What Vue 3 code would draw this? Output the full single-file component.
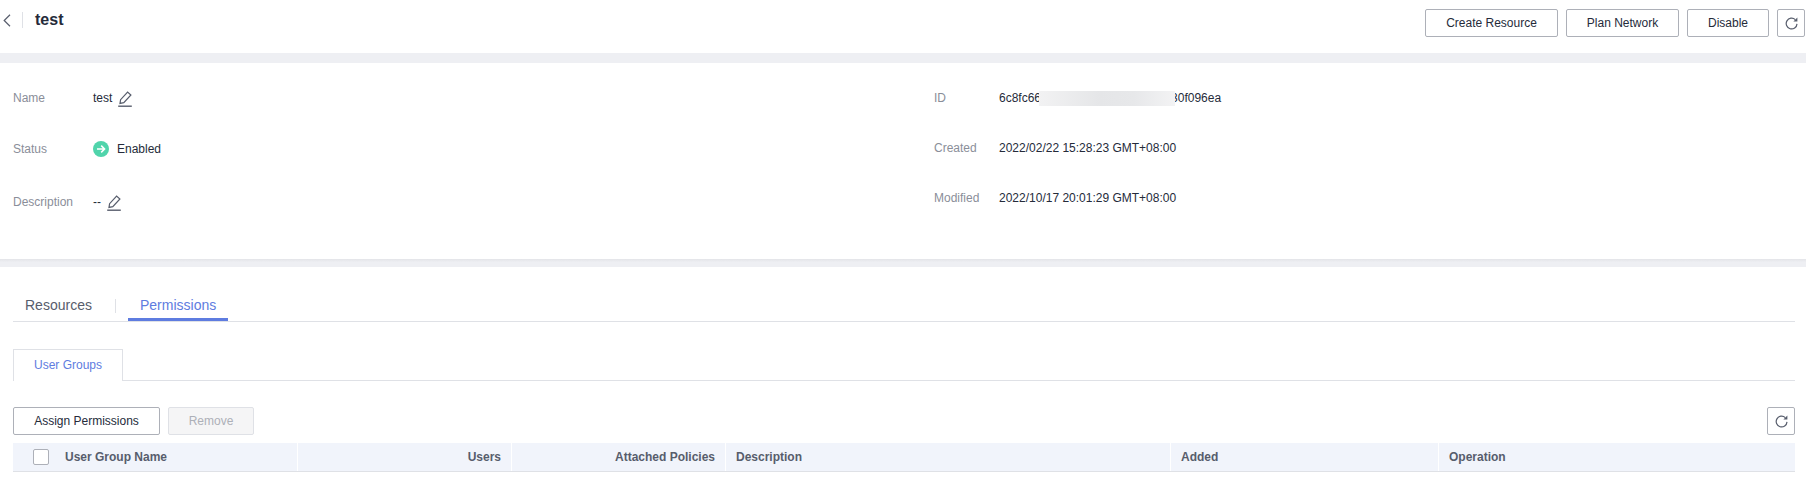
<script setup>
const leftRows = [
  { label: 'Name', value: 'test', edit: true, kind: '' },
  { label: 'Status', value: 'Enabled', status: true, kind: 'nudge-status' },
  { label: 'Description', value: '--', edit: true, kind: 'nudge-desc' },
]
const rightRows = [
  { label: 'Created', value: '2022/02/22 15:28:23 GMT+08:00' },
  { label: 'Modified', value: '2022/10/17 20:01:29 GMT+08:00' },
]
const columns = [
  { label: 'Users', end: true },
  { label: 'Attached Policies', end: true },
  { label: 'Description' },
  { label: 'Added' },
  { label: 'Operation' },
]
</script>

<template>
  <div class="page">
    <header class="top">
      <svg class="back" width="8" height="13" viewBox="0 0 8 13"><path d="M7 .8 1.2 6.5 7 12.2" fill="none" stroke="#575d6c" stroke-width="1.2"/></svg>
      <span class="top-sep"></span>
      <h1 class="title">test</h1>
      <div class="top-actions">
        <button class="btn create">Create Resource</button>
        <button class="btn plan">Plan Network</button>
        <button class="btn disable">Disable</button>
        <button class="btn icon-btn" aria-label="Refresh">
          <svg width="13" height="13" viewBox="0 0 13 13"><path d="M12 6.9A5.4 5.4 0 1 1 10.3 2.6" fill="none" stroke="#575d6c" stroke-width="1.2"/><path d="M12.4 .6v4H8.4z" fill="#575d6c"/></svg>
        </button>
      </div>
    </header>
    <div class="band"></div>

    <section class="info">
      <div class="col col-left">
        <div v-for="row in leftRows" :key="row.label" class="row" :class="row.kind">
          <span class="label">{{ row.label }}</span>
          <span v-if="row.status" class="status-dot">
            <svg width="10" height="10" viewBox="0 0 10 10"><path d="M1 5h7.4M5.2 1.6 8.6 5 5.2 8.4" fill="none" stroke="#fff" stroke-width="1.5"/></svg>
          </span>
          <span class="value">{{ row.value }}</span>
          <svg v-if="row.edit" class="edit" width="14" height="16" viewBox="0 0 14 16">
            <path d="M2 12.4 2.6 8.7 9.6 1 12.9 4 5.8 11.6Z" fill="none" stroke="#575d6c" stroke-width="1.2"/>
            <path d="M.2 15.2h13.6" stroke="#575d6c" stroke-width="1.4"/>
          </svg>
        </div>
      </div>
      <div class="col col-right">
        <div class="row">
          <span class="label">ID</span>
          <span class="value">6c8fc66</span>
          <span class="redact"></span>
          <span class="value id-tail">30f096ea</span>
        </div>
        <div v-for="row in rightRows" :key="row.label" class="row">
          <span class="label">{{ row.label }}</span>
          <span class="value">{{ row.value }}</span>
        </div>
      </div>
    </section>
    <div class="band band-thin"></div>

    <section class="content">
      <nav class="tabs">
        <span class="tab">Resources</span>
        <span class="tab-sep"></span>
        <span class="tab active">Permissions</span>
      </nav>
      <div class="subtabs">
        <span class="subtab">User Groups</span>
      </div>
      <div class="toolbar">
        <button class="btn assign">Assign Permissions</button>
        <button class="btn remove" disabled>Remove</button>
        <button class="btn icon-btn table-refresh" aria-label="Refresh">
          <svg width="13" height="13" viewBox="0 0 13 13"><path d="M12 6.9A5.4 5.4 0 1 1 10.3 2.6" fill="none" stroke="#575d6c" stroke-width="1.2"/><path d="M12.4 .6v4H8.4z" fill="#575d6c"/></svg>
        </button>
      </div>
      <div class="thead">
        <div class="th th-name">
          <span class="checkbox"></span>
          <span>User Group Name</span>
        </div>
        <div v-for="c in columns" :key="c.label" class="th" :class="{ end: c.end }">{{ c.label }}</div>
      </div>
    </section>
  </div>
</template>

<style>
html, body { margin: 0; background: #fff; }
</style>

<style scoped>
.page {
  width: 1806px;
  height: 500px;
  overflow: hidden;
  font-family: "Liberation Sans", Arial, sans-serif;
  font-size: 12px;
  color: #252b3a;
  background: #fff;
}
.top {
  height: 53px;
  display: flex;
  align-items: center;
  padding: 0 1px 0 3px;
  box-sizing: border-box;
}
.back { margin-top: -13px; flex: none; }
.top-sep { width: 1px; height: 16px; background: #dfe1e6; margin: -13px 0 0 11px; }
.title { margin: -13px 0 0 12px; font-size: 16px; font-weight: 700; line-height: 24px; }
.top-actions { margin-left: auto; margin-top: -7px; display: flex; gap: 8px; }
.btn {
  height: 28px;
  box-sizing: border-box;
  padding: 0;
  border: 1px solid #adb0b8;
  border-radius: 2px;
  background: #fff;
  color: #252b3a;
  font: 12px "Liberation Sans", Arial, sans-serif;
}
.create { width: 133px; }
.plan { width: 113px; }
.disable { width: 82px; }
.icon-btn { width: 28px; display: flex; align-items: center; justify-content: center; }
.band { height: 10px; background: #eeeff3; }
.band-thin { height: 8px; background: linear-gradient(#e3e4e8, #eeeff3 40%); }
.info {
  height: 196px;
  box-sizing: border-box;
  padding: 10px 0 0 13px;
  display: flex;
}
.col-left { width: 921px; }
.row { height: 50px; display: flex; align-items: center; }
.row.nudge-status { margin-top: 1px; }
.row.nudge-desc { margin-top: 3px; }
.label { color: #8a8e99; flex: none; }
.col-left .label { width: 80px; }
.col-right .label { width: 65px; }
.value { white-space: nowrap; }
.status-dot {
  width: 16px;
  height: 16px;
  border-radius: 50%;
  background: #50d4ab;
  display: flex;
  align-items: center;
  justify-content: center;
  margin-right: 8px;
}
.edit { margin: 2px 0 0 6px; flex: none; }
.redact {
  width: 136px;
  height: 15px;
  margin-left: -2px;
  position: relative;
  z-index: 1;
  background: linear-gradient(90deg, #f2f2f3, #e5e6e8 45%, #e7e8ea 70%, #f3f3f4);
}
.id-tail { margin-left: -4px; }
.content { padding: 22px 11px 0 13px; }
.tabs {
  height: 32px;
  border-bottom: 1px solid #dfe1e6;
  display: flex;
  align-items: flex-start;
  font-size: 14px;
  color: #575d6c;
}
.tab {
  height: 32px;
  line-height: 32px;
  box-sizing: border-box;
  padding: 0 12px;
  width: 91px;
}
.tab.active {
  width: 100px;
  color: #5e7ce0;
  border-bottom: 3px solid #5e7ce0;
  margin-left: 12px;
}
.tab-sep { width: 1px; height: 14px; background: #dfe1e6; margin: 10px 0 0 11px; }
.subtabs {
  margin-top: 27px;
  height: 32px;
  box-sizing: border-box;
  border-bottom: 1px solid #dfe1e6;
  display: flex;
}
.subtab {
  width: 110px;
  height: 32px;
  box-sizing: border-box;
  border: 1px solid #dfe1e6;
  border-bottom: 0;
  background: #fff;
  color: #5e7ce0;
  text-align: center;
  line-height: 31px;
}
.toolbar {
  margin-top: 26px;
  display: flex;
  gap: 8px;
}
.assign { width: 147px; }
.remove { width: 86px; background: #f5f5f6; border-color: #dfe1e6; color: #adb0b8; }
.table-refresh { margin-left: auto; }
.thead {
  margin-top: 8px;
  height: 29px;
  box-sizing: border-box;
  border-bottom: 1px solid #dfe1e6;
  background: #f1f4fb;
  display: grid;
  grid-template-columns: 284px 214px 214px 445px 268px 357px;
  font-weight: 700;
  color: #575d6c;
}
.th {
  display: flex;
  align-items: center;
  padding: 0 10px;
  box-sizing: border-box;
  border-left: 1px solid #fff;
  white-space: nowrap;
}
.th.end { justify-content: flex-end; }
.th-name { border-left: 0; padding-left: 20px; }
.checkbox {
  width: 16px;
  height: 16px;
  box-sizing: border-box;
  border: 1px solid #adb0b8;
  border-radius: 2px;
  background: #fff;
  margin-right: 16px;
}
</style>
